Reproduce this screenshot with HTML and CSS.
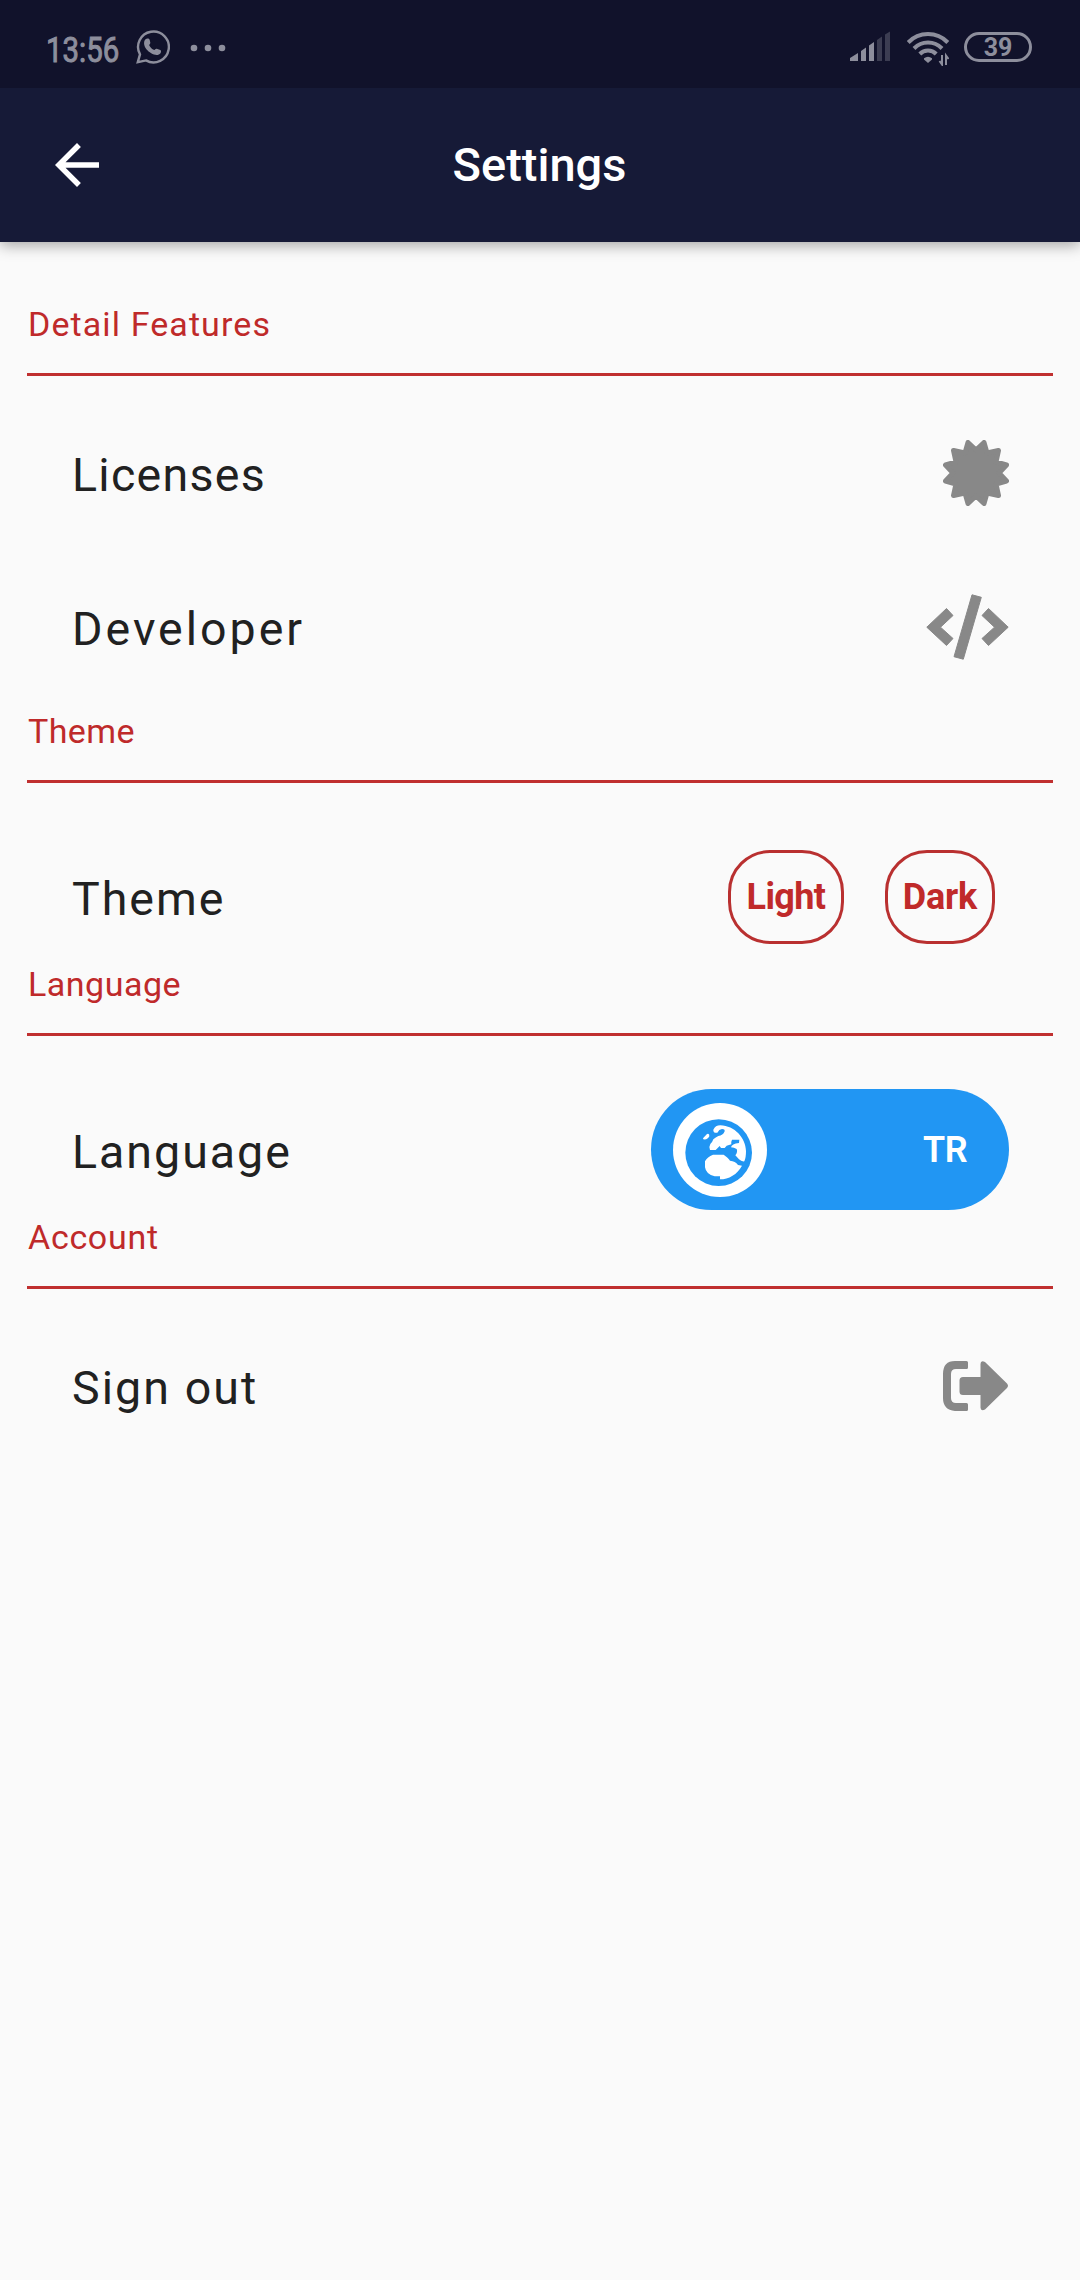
FILE: index.html
```html
<!DOCTYPE html>
<html lang="en">
<head>
<meta charset="utf-8">
<title>Settings</title>
<link rel="stylesheet" href="styles.css">
</head>
<body>
<div class="status">
  <span class="clock">13:56</span>
  <svg class="whatsapp" width="34" height="34" viewBox="0 0 34 34"><path d="M1.8 32.2 4 24.4A15.4 15.4 0 1 1 10 30.4Z" fill="none" stroke="currentColor" stroke-width="2.4" stroke-linejoin="miter"/><path d="M9.5 9.2c1.7-1 3.600-.7 4.200.8l.6 2.600c.2 1-.7 2-1.200 2.500.9 2.200 2.800 4.100 5.200 5 .7-.7 1.500-1.600 2.500-1.300l3.500 1.300c1 .5.9 2.100.2 3.100-2 2.700-6 2-9.300.1-3.700-2.100-6.700-5.600-7.100-9.200-.1-2 .2-3.900 1.400-4.900Z" fill="currentColor"/></svg>
  <svg class="dots" width="36" height="8" viewBox="0 0 36 8" fill="currentColor"><circle cx="4" cy="4" r="3.3"/><circle cx="18" cy="4" r="3.3"/><circle cx="32" cy="4" r="3.3"/></svg>
  <div class="indicators">
    <svg width="42" height="36" viewBox="850 30 42 36" fill="currentColor"><path d="M850 61v-3l8-5v8zM861 61V51l5-3.500V61zM869 61V45.500l5-3.500V61z"/><path opacity=".35" d="M877 61V40l5-3.500V61zM885 61V34.500l5-3V61z"/></svg>
    <svg width="43" height="36" viewBox="905 30 43 36" fill="none" stroke="currentColor" stroke-width="4"><path d="M907.200 42.500a27.500 27.500 0 0 1 39.600 0M913 48.500a19.500 19.500 0 0 1 28 0M918.800 54a11.500 11.500 0 0 1 16.400 0"/><path stroke="none" fill="currentColor" d="M923 58.300q4-3 8 0v1.200l-4 3.500-4-3.500z"/><path stroke-width="2" d="M941 55v9.500l-2.500-3.500M945 65v-9.500l2.500 3.500"/></svg>
    <span class="battery">39</span>
  </div>
</div>
<header class="appbar">
  <svg class="back" width="44" height="44" viewBox="4 4 16 16" fill="#fff"><path d="M20 11H7.830l5.590-5.590L12 4l-8 8 8 8 1.410-1.410L7.830 13H20v-2z"/></svg>
  <h1>Settings</h1>
</header>
<main>
  <section>
    <h2 class="w-details">Detail Features</h2>
    <div class="row"><span class="label w-licenses">Licenses</span>
      <svg width="66" height="66" viewBox="-33 -33 66 66" fill="#888" stroke="#888" stroke-width="5" stroke-linejoin="round"><path d="M0-23 8-30.500 11-20 22.500-22.500 20-11 30.500-8 23 0 30.500 8 20 11 22.500 22.500 11 20 8 30.500 0 23-8 30.500-11 20-22.500 22.500-20 11-30.500 8-23 0-30.500-8-20-11-22.500-22.500-11-20-8-30.500Z"/></svg></div>
    <div class="row"><span class="label w-developer">Developer</span>
      <svg width="83" height="66" viewBox="0 0 83 66" fill="#888" stroke="#888" stroke-linejoin="round"><path d="M20.500 14.500 27 21.500 14.500 33.200 27 44.500 20.500 51.500.8 33.200ZM62.500 14.500 56 21.500 68.500 33.200 56 44.500 62.500 51.500 82.200 33.200ZM46 .8 55.300 3.300 37.300 65.200 28 62.700Z"/></svg></div>
  </section>
  <section>
    <h2 class="w-theme-s">Theme</h2>
    <div class="row tight"><span class="label w-theme">Theme</span>
      <div class="buttons"><button class="light">Light</button><button class="dark">Dark</button></div></div>
  </section>
  <section>
    <h2 class="w-lang-s">Language</h2>
    <div class="row tight"><span class="label w-lang">Language</span>
      <div class="switch"><span class="knob"><svg width="68" height="68" viewBox="165 176 204 204"><circle cx="266" cy="277" r="100" fill="#2196f3"/><g fill="#fff"><path d="M250 208q6-13 21-13c43 1 76 38 77 77q0 20-5 31-9 1-16-6l-11-12q8-10 4-19-8-4-17-5 2-11 24-13l1-10h-22q-4 8-2 14l-14 4-6 7h-11l-4-6-12 12h-17q-4-10 1-18 7-7 9-14 7-6 15-10 14-1 19-14 1-7-8-7-9 1-14 11-13 2-12-9Z"/><path d="m219 234 12-13q8-3 7 7-5 11-18 9ZM225 303q7-14 24-20h32q15 10 19 18 16 1 24 13l12 2c-14 26-40 41-66 41v-9h-16q-26-6-29-27Z"/></g></svg></span><span class="code">TR</span></div></div>
  </section>
  <section>
    <h2 class="w-account">Account</h2>
    <div class="row"><span class="label w-sign">Sign out</span>
      <svg width="66" height="50" viewBox="0 0 66 50" fill="#888"><path d="M12 0h11.500q1.500 0 1.500 1.500v5Q25 8 23.500 8H13Q8 8 8 13v24q0 5 5 5h10.500q1.500 0 1.500 1.500v5q0 1.500-1.500 1.500H12Q0 49 0 37V13Q0 0 12 0Z"/><path d="M37.500 16V3q0-4 4.500-2L64 22.500q2 2.300 0 4.500L42 48.500q-4.500 2-4.500-2V34H20q-3.500 0-3.500-3.500v-11Q16.500 16 20 16Z"/></svg></div>
  </section>
</main>
</body>
</html>
```
FILE: styles.css
```css
* { box-sizing: border-box; }
body { margin: 0; min-height: 2280px; background: #fafafa; font-family: Roboto, "Noto Sans", sans-serif; color: #212121; }
svg { display: block; flex: none; }
.status { position: relative; z-index: 1; height: 88px; background: #11122b; color: #8d8e9c; display: flex; align-items: center; padding: 7px 48px 0 46px; }
.clock { width: 90px; font-size: 35px; line-height: 40px; margin-top: 7px; transform: scaleX(.84); transform-origin: left; -webkit-text-stroke: 1px; }
.whatsapp { margin-top: -1px; }
.dots { margin-left: 20px; }
.indicators { margin-left: auto; display: flex; align-items: center; gap: 14px; }
.battery { width: 68px; height: 30px; margin: -1px 0 0 1px; border: 3px solid; border-radius: 15px; font-size: 25px; line-height: 25px; font-weight: 700; text-align: center; }
.appbar { height: 154px; background: #161a37; color: #fff; display: grid; grid-template-columns: 110px 1fr 110px; align-items: center; box-shadow: 0 3px 14px rgba(0,0,0,.36); }
.back { margin-left: 55px; }
h1 { margin: 0 1px 2px 0; font-size: 47px; font-weight: 500; text-align: center; }
main { padding: 55px 27px 0; }
h2 { margin: 0; height: 79px; padding-left: 1px; font-size: 34px; font-weight: 400; line-height: 54px; color: #bf2a2a; border-bottom: 3px solid #c03030; }
.row { height: 154px; margin: 0 44px 0 46px; display: flex; align-items: center; justify-content: space-between; }
h2 + .row { margin-top: 20px; }
h2 + .row.tight { height: 121px; margin-top: 53px; }
.label { margin-left: -1px; font-size: 46.5px; line-height: 60px; padding-top: 4px; }
.w-details { letter-spacing: 1.1px; }
.w-licenses { letter-spacing: 1.3px; }
.w-developer { letter-spacing: 3px; }
.w-theme-s { letter-spacing: .4px; }
.w-theme { letter-spacing: 2px; }
.w-lang-s { letter-spacing: .5px; }
.w-lang { letter-spacing: 2px; }
.w-account { letter-spacing: .7px; }
.w-sign { letter-spacing: 2.1px; }
.buttons { display: flex; gap: 41px; margin-right: 14px; }
button { height: 94px; padding: 0; background: none; border: 3px solid #b93030; border-radius: 42px; font: 700 36px Roboto, sans-serif; color: #c02a2a; }
.light { width: 116px; letter-spacing: -.6px; }
.dark { width: 110px; letter-spacing: -.2px; }
.switch { width: 358px; height: 121px; padding: 0 42px 0 22px; border-radius: 60.5px; background: #2196f3; display: flex; align-items: center; justify-content: space-between; }
.knob { width: 94px; height: 94px; border-radius: 50%; background: #fff; padding: 16px 0 0 12px; }
.code { font-size: 36px; font-weight: 600; letter-spacing: -.5px; color: #fff; }
```
